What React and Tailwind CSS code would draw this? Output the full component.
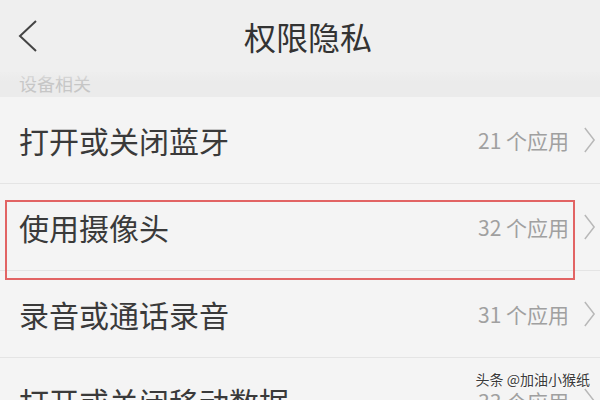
const rows = [
  { label: '打开或关闭蓝牙', count: '21 个应用' },
  { label: '使用摄像头', count: '32 个应用', marked: true },
  { label: '录音或通话录音', count: '31 个应用' },
  { label: '打开或关闭移动数据', count: '33 个应用' },
]

function Chevron({ className }) {
  return (
    <svg className={className} viewBox="0 0 14 30" fill="none" stroke="currentColor" strokeWidth="1.6">
      <path d="M2 2 L12 15 L2 28" />
    </svg>
  )
}

export default function App() {
  return (
    <main
      className="relative h-[400px] w-[600px] overflow-hidden bg-[#f4f4f4]"
      style={{ fontFamily: '"Noto Sans CJK SC", "Noto Sans", sans-serif' }}
    >
      <header className="relative z-10 flex h-[72px] items-center bg-[#efefef]">
        <svg className="ml-[17px] h-[34px] w-[22px] text-[#444]" viewBox="0 0 22 34" fill="none" stroke="currentColor" strokeWidth="2">
          <path d="M19 2 L3 17 L19 32" />
        </svg>
        <h1 className="absolute left-0 right-0 pl-[16px] text-center text-[32px] leading-none text-[#333]">权限隐私</h1>
      </header>

      <div className="relative h-[28px] bg-[#ebebeb]">
        <p className="-mt-[3px] pl-[19px] text-[18px] leading-[28px] text-[#c6c6c6]">设备相关</p>
        <div className="absolute inset-x-0 top-0 h-[13px] bg-gradient-to-b from-[#efefef] to-transparent" />
      </div>

      <ul>
        {rows.map((row) => (
          <li key={row.label} className="relative flex h-[87px] items-center border-b border-[#e4e4e4] pl-[19px] pr-[4px]">
            <span className="flex-1 text-[30px] leading-none text-[#3a3a3a]">{row.label}</span>
            <span className="text-[21px] leading-none text-[#a0a0a0]">{row.count}</span>
            <Chevron className="ml-[14px] h-[28px] w-[13px] text-[#b8b8b8]" />
            {row.marked ? (
              <div className="absolute left-[5px] top-[16px] h-[80px] w-[570px] border-2 border-[#e26464]" />
            ) : null}
          </li>
        ))}
      </ul>

      <p
        className="absolute right-[10px] top-[372px] text-[14px] leading-none text-[#3a3a3a]"
        style={{ textShadow: '0 0 2px #fff, 0 0 2px #fff' }}
      >
        头条 @加油小猴纸
      </p>
    </main>
  )
}
